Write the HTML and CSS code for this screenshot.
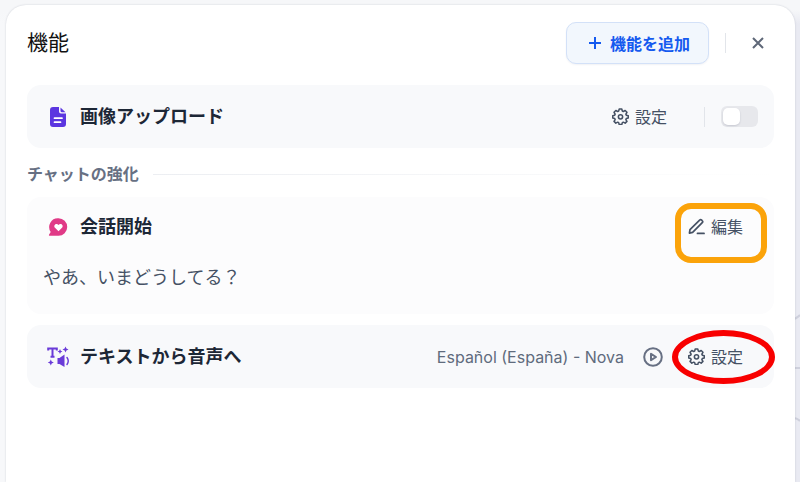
FILE: index.html
```html
<!DOCTYPE html>
<html lang="ja">
<head>
    <meta charset="UTF-8">
    <meta name="viewport" content="width=device-width, initial-scale=1.0">
    <title>機能</title>
    <link rel="stylesheet" href="styles.css">
</head>
<body>
    <!-- shared gear icon -->
    <svg class="sprite" aria-hidden="true">
        <symbol id="gear" viewBox="0 0 24 24">
            <path fill="none" stroke="currentColor" stroke-width="2.200" stroke-linejoin="round" d="M10.200 1.500h3.600l.8 2.900 1.300.6 2.700-1.400 2.500 2.500-1.500 2.600.6 1.400 2.800.8v3.200l-2.800.8-.6 1.400 1.500 2.600-2.500 2.500-2.700-1.400-1.300.6-.8 2.900h-3.600l-.8-2.900-1.300-.6-2.700 1.400-2.500-2.500 1.500-2.600-.6-1.400-2.800-.8v-3.200l2.800-.8.6-1.400-1.500-2.600 2.500-2.500 2.700 1.400 1.300-.6z"/>
            <circle cx="12" cy="12.500" r="3" fill="none" stroke="currentColor" stroke-width="2.200"/>
        </symbol>
    </svg>

    <svg class="canvas-lines" viewBox="0 0 6 110" aria-hidden="true">
        <path d="M0 5q3-1 6-4M0 54h6M0 104q3 0 6 3"/>
    </svg>

    <main class="panel">
        <header class="panel-header">
            <h1>機能</h1>
            <button class="add-button" type="button">
                <svg width="14" height="14" viewBox="0 0 14 14" aria-hidden="true"><path d="M7 1v12M1 7h12"/></svg>
                機能を追加
            </button>
            <span class="divider"></span>
            <button class="close-button" type="button" aria-label="閉じる">
                <svg width="12" height="12" viewBox="0 0 12 12" aria-hidden="true"><path d="M1 1l10 10M11 1L1 11"/></svg>
            </button>
        </header>

        <section class="card">
            <div class="card-row">
                <svg class="card-icon" viewBox="0 0 22 22" aria-hidden="true">
                    <path fill="#5b36e0" d="M6 1h6v4.500q0 2 2 2h5V18q0 3-3 3H6q-3 0-3-3V4q0-3 3-3z"/>
                    <path fill="#5b36e0" d="M13.500 1.500l5 4.700h-3.500q-1.500 0-1.500-1.500z"/>
                    <path stroke="#fff" stroke-width="1.700" stroke-linecap="round" d="M7.500 12.200h7.500M7.500 16.200h6"/>
                </svg>
                <h2 id="upload-title">画像アップロード</h2>
                <button class="action upload-action" type="button"><svg class="action-icon" aria-hidden="true"><use href="#gear"/></svg>設定</button>
                <span class="divider"></span>
                <input class="switch" type="checkbox" role="switch" aria-labelledby="upload-title">
            </div>
        </section>

        <div class="group-title"><h3>チャットの強化</h3><span class="line"></span></div>

        <section class="card card-light">
            <div class="card-row">
                <svg class="card-icon" viewBox="0 0 22 22" aria-hidden="true">
                    <path fill="#e03a87" d="M11.500 2.300a8.700 8.700 0 1 1 0 17.400H2.300q-.8-.3-.2-1.100l1.600-2.700A8.700 8.700 0 0 1 11.500 2.300z"/>
                    <path fill="#fff" d="M11.500 15.300L8 11.800c-2.200-2.600 1.500-5.500 3.500-2.900 2-2.600 5.700.3 3.500 2.900z"/>
                </svg>
                <h2>会話開始</h2>
                <button class="action marked marked-box" type="button">
                    <svg class="action-icon" viewBox="0 0 18 18" aria-hidden="true"><path fill="none" stroke="currentColor" stroke-width="1.800" stroke-linejoin="round" stroke-linecap="round" d="M1.500 16l.6-3.600L12.300 2.200q1.100-1 2.200 0l.6.7q1 1 0 2.100L4.900 15.200zM10 16.300h7"/></svg>編集
                </button>
            </div>
            <p class="opener">やあ、いまどうしてる？</p>
        </section>

        <section class="card">
            <div class="card-row">
                <svg class="card-icon" viewBox="0 0 22 22" aria-hidden="true">
                    <path fill="none" stroke="#6a3bd8" stroke-width="2" d="M1.200 4.500V2.400h8.600v2.100M5.500 2.400v8.400M3.500 10.800h4"/>
                    <path fill="#6a3bd8" d="M13 3l.8 1.700 1.700.8-1.700.8L13 8l-.8-1.700-1.700-.8 1.700-.8zM18.500.5l.9 2.100 2.100.9-2.100.9-.9 2.100-.9-2.100-2.100-.9 2.100-.9zM3.800 13.500l.9 2.100 2.100.9-2.100.9-.9 2.100-.9-2.100-2.100-.9 2.100-.9zM12.500 12l5-3.500v12.500l-5-3h-2v-6z"/>
                    <path fill="none" stroke="#6a3bd8" stroke-width="1.400" stroke-linecap="round" d="M20 11.500q2.500 3.500 0 7"/>
                </svg>
                <h2>テキストから音声へ</h2>
                <span class="voice">Español (España) - Nova</span>
                <button class="play-button" type="button" aria-label="再生">
                    <svg width="20" height="20" viewBox="0 0 20 20" aria-hidden="true"><circle cx="10" cy="10" r="8.800"/><path d="M8 6.800v6.400l5-3.200z"/></svg>
                </button>
                <button class="action marked marked-oval" type="button"><svg class="action-icon" aria-hidden="true"><use href="#gear"/></svg>設定</button>
            </div>
        </section>
    </main>
</body>
</html>
```
FILE: styles.css
```css
* { box-sizing: border-box; }

body {
    font-family: Inter, 'Noto Sans CJK JP', sans-serif;
    color: #1d2736;
    margin: 0;
    padding: 5px 5px 0 6px;
    min-height: 100vh;
    display: flex;
    background:
        linear-gradient(to bottom, #f6f7f9 10px, transparent 24px),
        linear-gradient(to right, #f7f8fa 50%, #e9eaf2 50%);
}

h1, h2, h3, p { margin: 0; }

button {
    font: inherit;
    border: none;
    background: none;
    padding: 0;
    display: flex;
    align-items: center;
    cursor: pointer;
}

.sprite {
    position: absolute;
    width: 0;
    height: 0;
}

/* graph edges of the canvas behind the panel */
.canvas-lines {
    position: absolute;
    right: 0;
    top: 314px;
    width: 6px;
    height: 110px;
    fill: none;
    stroke: #ced0dc;
    stroke-width: 2;
}

.panel {
    position: relative;
    flex: 1;
    background: #fff;
    border-radius: 20px 20px 0 0;
    box-shadow: 0 0 2px rgba(30, 40, 70, 0.2);
    padding: 16px 21px;
}

.panel-header {
    display: flex;
    align-items: center;
    height: 44px;
    margin-bottom: 20px;
}

h1 {
    flex: 1;
    font-size: 21px;
    font-weight: 400;
    line-height: 32px;
    color: #111;
}

.add-button {
    height: 42px;
    padding: 0 18px 0 21px;
    gap: 8px;
    border: 1px solid #d3e1f8;
    border-radius: 10px;
    background: #f2f7fd;
    box-shadow: 0 1px 2px rgba(20, 40, 80, 0.06);
    color: #155aef;
    font-size: 16px;
    font-weight: 700;
}

.add-button svg, .close-button svg {
    fill: none;
    stroke: currentColor;
    stroke-width: 2;
}

.divider {
    width: 1px;
    height: 20px;
    margin: 0 16px;
    background: #e2e5ea;
}

.close-button {
    width: 32px;
    height: 32px;
    justify-content: center;
    color: #5f6878;
}

.card {
    background: #f8f9fb;
    border-radius: 14px;
    padding: 16px;
    margin-bottom: 11px;
}

.card-light {
    background: #fcfcfd;
    padding-top: 14px;
}

.card-row {
    display: flex;
    align-items: center;
    height: 31px;
}

.card-icon {
    width: 22px;
    height: 22px;
    margin: 0 11px 0 4px;
}

h2 {
    flex: 1;
    font-size: 18px;
    font-weight: 700;
    line-height: 28px;
}

.action {
    position: relative;
    gap: 6px;
    color: #455164;
    font-size: 16px;
    line-height: 24px;
}

.action-icon {
    width: 17px;
    height: 17px;
}

.upload-action { margin-right: 21px; }

.switch {
    appearance: none;
    width: 37px;
    height: 21px;
    margin: 0;
    padding: 2px;
    border-radius: 6px;
    background: #e7e8ec;
}

.switch::before {
    content: '';
    display: block;
    width: 17px;
    height: 17px;
    border-radius: 5px;
    background: #fff;
    box-shadow: 0 1px 2px rgba(20, 30, 60, 0.15);
}

.group-title {
    display: flex;
    align-items: center;
    gap: 14px;
    height: 30px;
    margin-bottom: 8px;
}

h3 {
    font-size: 16px;
    font-weight: 700;
    line-height: 24px;
    color: #677083;
}

.line {
    flex: 1;
    height: 1px;
    background: linear-gradient(to right, #eceef2, #fff);
}

.opener {
    margin-top: 22px;
    padding-bottom: 6px;
    font-size: 18px;
    line-height: 28px;
    color: #455164;
}

.voice {
    font-size: 16px;
    color: #5f6b7d;
}

.play-button {
    margin: 0 25px 0 19px;
    color: #677083;
}

.play-button svg {
    fill: none;
    stroke: currentColor;
    stroke-width: 2;
    stroke-linejoin: round;
}

.marked { margin-right: 15px; }

/* highlight rings drawn round a button */
.marked::after {
    content: '';
    position: absolute;
    pointer-events: none;
}

.marked-box::after {
    inset: -12px -24px -24px -13px;
    border: 6px solid #fba30a;
    border-radius: 16px;
}

.marked-oval::after {
    inset: -15px -32px -15px -16px;
    border: 6px solid #f80000;
    border-radius: 50%;
}
```
